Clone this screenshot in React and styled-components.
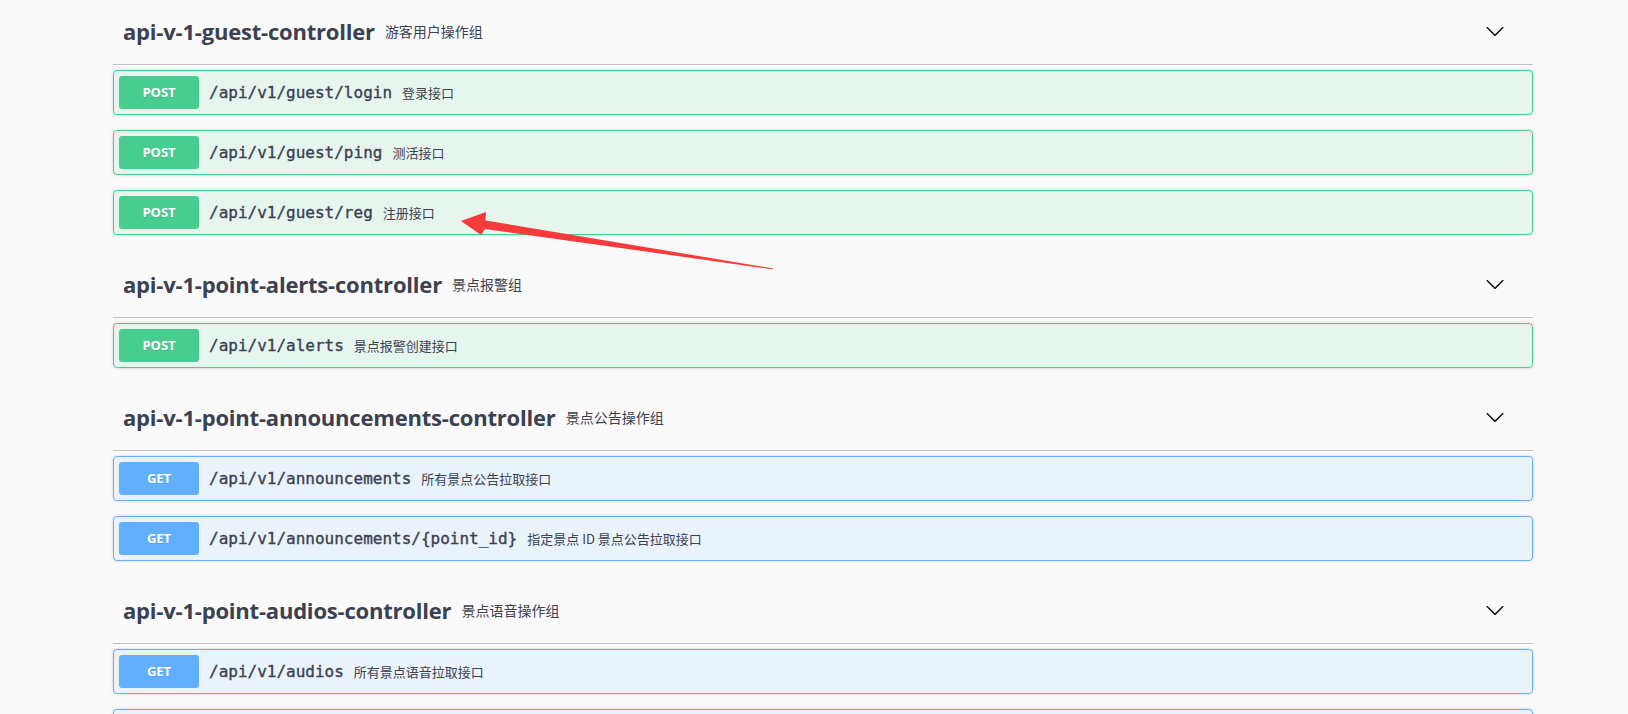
import React from "react";
import styled, { createGlobalStyle } from "styled-components";

const GlobalStyle = createGlobalStyle`
  html, body {
    margin: 0;
    padding: 0;
    background: #fafafa;
    font-family: "Open Sans", "Noto Sans CJK SC", sans-serif;
    color: #3b4151;
  }
  body { overflow: hidden; }
`;

const Wrapper = styled.div`
  width: 1420px;
  margin: -3px 0 0 113px;
`;

const TagSection = styled.section`
  display: flex;
  flex-direction: column;
  margin-bottom: 0;
`;

const TagHeading = styled.h3`
  display: flex;
  align-items: center;
  box-sizing: border-box;
  min-height: 68px;
  margin: 0 0 5px;
  padding: 10px 20px 10px 10px;
  border-bottom: 1px solid rgba(59, 65, 81, 0.3);
  font-family: "Open Sans", sans-serif;
  font-size: 22px;
  font-weight: 700;
  color: #3b4151;
`;

const TagName = styled.span`
  letter-spacing: -0.2px;
`;

const TagDesc = styled.small`
  flex: 1;
  padding: 0 10px;
  font-family: "Noto Sans CJK SC", "Open Sans", sans-serif;
  font-size: 14px;
  font-weight: 400;
  color: #3b4151;
`;

const ExpandButton = styled.button`
  display: flex;
  align-items: center;
  border: none;
  background: none;
  padding: 0 8px 0 10px;
  cursor: pointer;
  svg {
    width: 20px;
    height: 20px;
  }
`;

const palette = {
  post: { border: "#49cc90", bg: "rgba(73, 204, 144, 0.1)" },
  get: { border: "#61affe", bg: "rgba(97, 175, 254, 0.1)" },
};

const OpBlock = styled.div`
  margin: 0 0 15px;
  border: 1px solid ${(p) => palette[p.$method].border};
  border-radius: 4px;
  background: ${(p) => palette[p.$method].bg};
  box-shadow: 0 0 3px rgba(0, 0, 0, 0.19);
`;

const Summary = styled.div`
  display: flex;
  align-items: center;
  padding: 5px;
`;

const Method = styled.span`
  min-width: 80px;
  box-sizing: border-box;
  padding: 6px 15px;
  border-radius: 3px;
  background: ${(p) => palette[p.$method].border};
  color: #fff;
  font-family: "Open Sans", sans-serif;
  font-size: 13px;
  font-weight: 700;
  line-height: 21px;
  text-align: center;
  text-shadow: 0 1px 0 rgba(0, 0, 0, 0.1);
`;

const Path = styled.span`
  padding: 0 10px;
  font-family: "DejaVu Sans Mono", monospace;
  font-size: 16px;
  font-weight: 400;
  -webkit-text-stroke: 0.35px #3b4151;
  color: #3b4151;
`;

const Desc = styled.span`
  font-family: "Noto Sans CJK SC", "Open Sans", sans-serif;
  font-size: 13px;
  color: #3b4151;
`;

const ArrowOverlay = styled.svg`
  position: absolute;
  top: 0;
  left: 0;
  pointer-events: none;
`;

const Chevron = () => (
  <svg viewBox="0 0 20 20" aria-hidden="true">
    <path
      fill="#111"
      d="M17.418 6.109c.272-.268.709-.268.979 0s.271.701 0 .969l-7.908 7.830c-.27.268-.707.268-.979 0l-7.908-7.830c-.27-.268-.27-.701 0-.969.271-.268.709-.268.979 0L10 13.25l7.418-7.141z"
    />
  </svg>
);

const groups = [
  {
    name: "api-v-1-guest-controller",
    desc: "游客用户操作组",
    ops: [
      { method: "post", path: "/api/v1/guest/login", desc: "登录接口" },
      { method: "post", path: "/api/v1/guest/ping", desc: "测活接口" },
      { method: "post", path: "/api/v1/guest/reg", desc: "注册接口" },
    ],
  },
  {
    name: "api-v-1-point-alerts-controller",
    desc: "景点报警组",
    ops: [{ method: "post", path: "/api/v1/alerts", desc: "景点报警创建接口" }],
  },
  {
    name: "api-v-1-point-announcements-controller",
    desc: "景点公告操作组",
    ops: [
      { method: "get", path: "/api/v1/announcements", desc: "所有景点公告拉取接口" },
      {
        method: "get",
        path: "/api/v1/announcements/{point_id}",
        desc: "指定景点 ID 景点公告拉取接口",
      },
    ],
  },
  {
    name: "api-v-1-point-audios-controller",
    desc: "景点语音操作组",
    ops: [
      { method: "get", path: "/api/v1/audios", desc: "所有景点语音拉取接口" },
      {
        method: "get",
        path: "/api/v1/audios/{point_id}",
        desc: "指定景点 ID 景点语音拉取接口",
      },
    ],
  },
];

export default function App() {
  return (
    <>
      <GlobalStyle />
      <Wrapper>
        {groups.map((g) => (
          <TagSection key={g.name}>
            <TagHeading>
              <TagName>{g.name}</TagName>
              <TagDesc>{g.desc}</TagDesc>
              <ExpandButton aria-label="collapse">
                <Chevron />
              </ExpandButton>
            </TagHeading>
            <div>
              {g.ops.map((op) => (
                <OpBlock key={op.path} $method={op.method}>
                  <Summary>
                    <Method $method={op.method}>{op.method.toUpperCase()}</Method>
                    <Path>{op.path}</Path>
                    <Desc>{op.desc}</Desc>
                  </Summary>
                </OpBlock>
              ))}
            </div>
          </TagSection>
        ))}
      </Wrapper>
      <ArrowOverlay width="1628" height="714" viewBox="0 0 1628 714">
        <polygon
          fill="#f73b3b"
          points="461,221 486,212 485.5,220.5 773,268.4 773,269.4 485,229 481,235"
        />
      </ArrowOverlay>
    </>
  );
}
